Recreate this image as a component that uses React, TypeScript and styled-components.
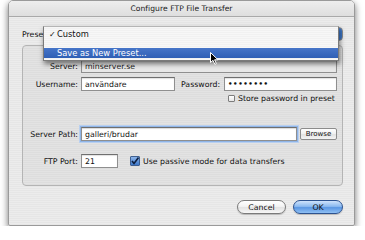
import React from "react";
import styled, { createGlobalStyle } from "styled-components";

const Global = createGlobalStyle`
  html, body { margin: 0; padding: 0; background: #ffffff; }
  body { font-family: "DejaVu Sans", "Liberation Sans", sans-serif; color: #111; }
`;

const Window = styled.div`
  position: relative;
  margin-left: 8px;
  width: 347px;
  height: 226px;
  box-sizing: border-box;
  border-radius: 5px 5px 2px 2px;
  border: 1px solid #9a9a9a;
  background: repeating-linear-gradient(180deg, #ececec 0px, #ececec 1px, #e6e6e6 1px, #e6e6e6 2px);
  box-shadow: 0 3px 7px rgba(0, 0, 0, 0.55);
  display: flex;
  flex-direction: column;
`;

const TitleBar = styled.div`
  height: 15px;
  flex: none;
  border-radius: 4px 4px 0 0;
  border-bottom: 1px solid #a9a9a9;
  background: linear-gradient(180deg, #eeeeee 0%, #dedede 100%);
  display: flex;
  align-items: center;
  justify-content: center;
  font-size: 7.6px;
  color: #1a1a1a;
  letter-spacing: 0.05px;
`;

const Body = styled.div`
  display: flex;
  flex-direction: column;
  padding: 10px 11px 0 13px;
  font-size: 7.8px;
`;

const PresetRow = styled.div`
  display: flex;
  align-items: center;
  height: 14px;
`;

const Label = styled.span<{ $w?: number }>`
  ${(p) => (p.$w ? `width: ${p.$w}px; text-align: right;` : "")}
  flex: none;
  white-space: nowrap;
  color: #111;
`;

const PopupButton = styled.div`
  flex: 1;
  margin-left: 3px;
  height: 14px;
  border-radius: 4px;
  border: 1px solid #8d8d8d;
  box-sizing: border-box;
  background: linear-gradient(90deg, #f4f4f4 0%, #f4f4f4 calc(100% - 14px), #5a93dc calc(100% - 14px), #3c76c8 100%);
`;

const Menu = styled.div`
  position: absolute;
  left: 34px;
  top: 25px;
  width: 296px;
  height: 35px;
  box-sizing: border-box;
  border: 1px solid #7a7a7a;
  border-top-color: #b5b5b5;
  background: repeating-linear-gradient(180deg, #f7f7f7 0px, #f7f7f7 1px, #f1f1f1 1px, #f1f1f1 2px);
  box-shadow: 1px 3px 5px rgba(0, 0, 0, 0.5);
  display: flex;
  flex-direction: column;
  font-size: 8.3px;
  z-index: 5;
`;

const MenuItem = styled.div<{ $selected?: boolean; $h: number; $mt?: number }>`
  height: ${(p) => p.$h}px;
  margin-top: ${(p) => p.$mt ?? 0}px;
  display: flex;
  align-items: center;
  padding-left: 13px;
  position: relative;
  color: ${(p) => (p.$selected ? "#ffffff" : "#111")};
  background: ${(p) => (p.$selected ? "linear-gradient(180deg, #4675c8 0%, #2f5fb5 100%)" : "transparent")};
`;

const Check = styled.span`
  position: absolute;
  left: 5px;
  font-size: 8px;
`;

const Cursor = styled.svg`
  position: absolute;
  left: 201px;
  top: 51px;
  z-index: 6;
`;

const GroupBox = styled.div`
  margin-top: 4px;
  height: 141px;
  box-sizing: border-box;
  border: 1px solid #b4b4b4;
  border-radius: 4px;
  background: rgba(0, 0, 0, 0.035);
  padding: 14px 5px 0 0;
  display: flex;
  flex-direction: column;
`;

const Row = styled.div<{ $mt?: number; $h: number }>`
  display: flex;
  align-items: center;
  height: ${(p) => p.$h}px;
  margin-top: ${(p) => p.$mt ?? 0}px;
`;

const Field = styled.div<{ $w?: number; $disabled?: boolean; $focus?: boolean; $h?: number }>`
  ${(p) => (p.$w ? `width: ${p.$w}px; flex: none;` : "flex: 1;")}
  height: ${(p) => p.$h ?? 14}px;
  margin-left: 3px;
  box-sizing: border-box;
  border: 1px solid #8f8f8f;
  border-top-color: #6f6f6f;
  background: ${(p) => (p.$disabled ? "#e8e8e8" : "#ffffff")};
  box-shadow: ${(p) =>
    p.$focus
      ? "0 0 0 1px #8fb4e6, 0 0 0 2px #b9d0f0, inset 0 1px 1px rgba(0,0,0,0.15)"
      : "inset 0 1px 1px rgba(0,0,0,0.12)"};
  display: flex;
  align-items: center;
  padding-left: 3px;
  font-size: 7.8px;
  color: ${(p) => (p.$disabled ? "#222" : "#111")};
  white-space: nowrap;
  overflow: hidden;
`;

const Dots = styled.span`
  font-size: 7px;
  letter-spacing: 0.6px;
  font-weight: bold;
`;

const CheckBox = styled.span<{ $checked?: boolean; $size: number; $ml?: number }>`
  width: ${(p) => p.$size}px;
  height: ${(p) => p.$size}px;
  flex: none;
  margin-left: ${(p) => p.$ml ?? 0}px;
  box-sizing: border-box;
  border: 1px solid ${(p) => (p.$checked ? "#3f5f8f" : "#7d7d7d")};
  border-radius: 1px;
  background: ${(p) =>
    p.$checked ? "linear-gradient(180deg, #8db5ea 0%, #3c77c9 100%)" : "linear-gradient(180deg, #ffffff, #e6e6e6)"};
  display: flex;
  align-items: center;
  justify-content: center;
  margin-right: 3px;
`;

const SmallButton = styled.div`
  width: 37px;
  height: 12px;
  flex: none;
  margin-left: 3px;
  box-sizing: border-box;
  border: 1px solid #8c8c8c;
  border-radius: 2px;
  background: linear-gradient(180deg, #ffffff 0%, #f0f0f0 50%, #e2e2e2 51%, #f4f4f4 100%);
  display: flex;
  align-items: center;
  justify-content: center;
  font-size: 7px;
  color: #111;
`;

const ButtonRow = styled.div`
  display: flex;
  justify-content: flex-end;
  gap: 7px;
  margin-top: 14px;
`;

const PillButton = styled.div<{ $primary?: boolean; $w: number }>`
  width: ${(p) => p.$w}px;
  height: 14px;
  box-sizing: border-box;
  border-radius: 7px;
  border: 1px solid ${(p) => (p.$primary ? "#2d5390" : "#7a7a7a")};
  background: ${(p) =>
    p.$primary
      ? "linear-gradient(180deg, #cfe3fb 0%, #8cbaf0 45%, #5b97e3 55%, #8fc0f4 100%)"
      : "linear-gradient(180deg, #ffffff 0%, #f3f3f3 45%, #e3e3e3 55%, #f7f7f7 100%)"};
  box-shadow: 0 1px 1px rgba(0, 0, 0, 0.2);
  display: flex;
  align-items: center;
  justify-content: center;
  font-size: 7.8px;
  color: #111;
`;

export default function App() {
  return (
    <>
      <Global />
      <Window>
        <TitleBar>Configure FTP File Transfer</TitleBar>
        <Body>
          <PresetRow>
            <Label>Preset:</Label>
            <PopupButton />
          </PresetRow>
          <GroupBox>
            <Row $h={13}>
              <Label $w={55}>Server:</Label>
              <Field $disabled $h={13}>minserver.se</Field>
            </Row>
            <Row $h={14} $mt={4}>
              <Label $w={55}>Username:</Label>
              <Field $w={94}>användare</Field>
              <Label style={{ marginLeft: 6 }}>Password:</Label>
              <Field style={{ marginLeft: 4 }}>
                <Dots>••••••••</Dots>
              </Field>
            </Row>
            <Row $h={9} $mt={3}>
              <CheckBox $size={7} $ml={205} />
              <Label>Store password in preset</Label>
            </Row>
            <Row $h={14} $mt={24}>
              <Label $w={55}>Server Path:</Label>
              <Field $focus>galleri/brudar</Field>
              <SmallButton>Browse</SmallButton>
            </Row>
            <Row $h={14} $mt={13}>
              <Label $w={55}>FTP Port:</Label>
              <Field $w={37}>21</Field>
              <CheckBox $checked $size={10} $ml={12}>
                <svg width="8" height="8" viewBox="0 0 8 8">
                  <path d="M1 4 L3 6.5 L7.5 0.5" stroke="#0d1f3f" strokeWidth="1.6" fill="none" />
                </svg>
              </CheckBox>
              <Label>Use passive mode for data transfers</Label>
            </Row>
          </GroupBox>
          <ButtonRow>
            <PillButton $w={49}>Cancel</PillButton>
            <PillButton $w={50} $primary>OK</PillButton>
          </ButtonRow>
        </Body>
        <Menu>
          <MenuItem $h={14}>
            <Check>✓</Check>
            Custom
          </MenuItem>
          <MenuItem $h={10} $mt={7} $selected>
            Save as New Preset...
          </MenuItem>
        </Menu>
        <Cursor width="9" height="13" viewBox="0 0 9 13">
          <path d="M0.5 0.5 L0.5 10.5 L3 8.3 L4.8 12.3 L6.3 11.6 L4.6 7.8 L8 7.8 Z" fill="#000" stroke="#fff" strokeWidth="1" />
        </Cursor>
      </Window>
    </>
  );
}
